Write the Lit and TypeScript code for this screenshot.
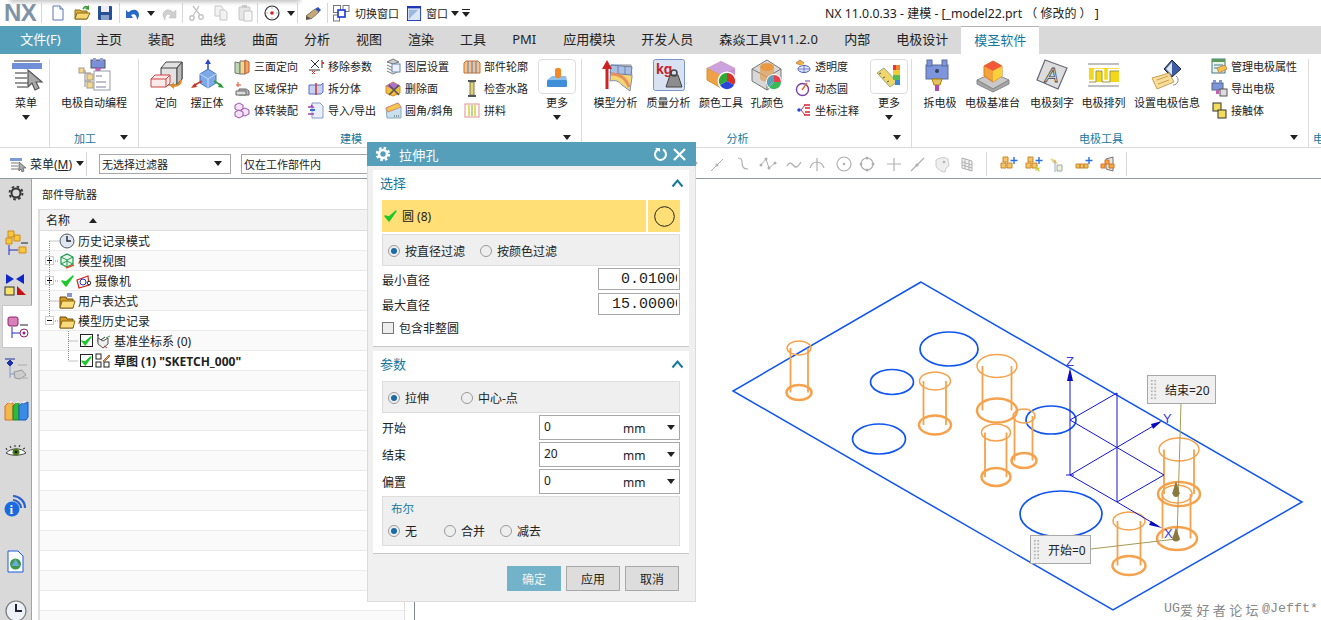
import { LitElement, html, svg, css } from 'lit';
import { customElement } from 'lit/decorators.js';

// icon helper: every icon is drawn in a square viewBox
const ic = (size: number, body: unknown, box = size) =>
  html`<svg width=${size} height=${size} viewBox="0 0 ${box} ${box}">${body}</svg>`;

const arrow = html`<svg width="8" height="5" viewBox="0 0 8 5"><path d="M0 0h8L4 5z" fill="#222" /></svg>`;
const barArrow = html`<svg width="8" height="8" viewBox="0 0 8 8"><path d="M0 0h8v1H0zM0 3h8L4 8z" fill="#222" /></svg>`;

/* ---------- large ribbon icons ---------- */
const big = {
  menu: svg`<path d="M2 4h30v6H2z" fill="#6f8fd8"/><path d="M4 2h26M5 14h12M5 19h12M5 24h14M7 28h10" stroke="#777" stroke-width="1.6"/><path d="M18 11l0 17 4-4 3 7 4-2-3-6 6 0z" fill="#aaa" stroke="#555" stroke-width="1.2"/>`,
  auto: svg`<rect x="13" y="1" width="14" height="8" fill="#7b8fd8" stroke="#556"/><rect x="15" y="-1" width="3" height="3" fill="#8fa0d8"/><rect x="22" y="-1" width="3" height="3" fill="#8fa0d8"/><path d="M17 9h6l-1 4h-4z" fill="#c45bb8"/><path d="M7 11v17M7 14h6M7 22h6" stroke="#888" fill="none"/><rect x="1" y="9" width="5" height="5" fill="#f2d98a" stroke="#a98"/><rect x="9" y="15" width="6" height="6" fill="#f2d98a" stroke="#a98"/><rect x="9" y="23" width="6" height="6" fill="#f2d98a" stroke="#a98"/><rect x="16" y="12" width="16" height="19" fill="#fff" stroke="#99a"/><path d="M18 17h6M18 23h10M18 28h10" stroke="#aab" stroke-width="1.4"/>`,
  orient: svg`<path d="M11 9l5-6h16v17l-5 6H11z" fill="#e2e2e2" stroke="#444"/><path d="M11 9h16v17M27 9l5-6" fill="none" stroke="#444"/><path d="M27 9v17l5-6V3z" fill="#bbb" stroke="#444"/><path d="M1 20l4-4h15v8l-4 4H1z" fill="#fbeaea" stroke="#c44"/><path d="M1 20h15v8M16 20l4-4" fill="none" stroke="#c44"/><path d="M31 21c0 5-4 6-8 6" fill="none" stroke="#e98a1e" stroke-width="2"/><path d="M24 23l-4 4 4 3z" fill="#e98a1e"/>`,
  align: svg`<path d="M17 2v12" stroke="#2b45c4" stroke-width="1.5"/><path d="M17 0l-3 5h6z" fill="#2b45c4"/><path d="M9 15l8-5 8 5v9l-8 5-8-5z" fill="#7ea9e8" stroke="#4a77c4"/><path d="M9 15l8 5 8-5M17 20v9" fill="none" stroke="#c8dcf5"/><path d="M11 22L2 27" stroke="#c8352b" stroke-width="1.5"/><path d="M0 29l6-1-2-4z" fill="#c8352b"/><path d="M23 22l8 5" stroke="#2c9a3a" stroke-width="1.5"/><path d="M33 29l-6-1 2-4z" fill="#2c9a3a"/>`,
  shape: svg`<path d="M11 6l20 0 1 12-2 14-8-6c-3-4-7-5-12-4z" fill="#f5d675" stroke="#7d8fb0"/><path d="M11 6l21 2-1 8-21-2z" fill="#a9c0e4" stroke="#6a7fa5"/><path d="M11 15c8 0 15 4 18 13" fill="none" stroke="#ea8f5a" stroke-width="3"/><path d="M18 6v8M25 7v9" stroke="#6a7fa5"/><path d="M7 30V9" stroke="#c22" stroke-width="3"/><path d="M7 1l-5 9h10z" fill="#c22"/>`,
  kg: svg`<rect x="0.5" y="0.5" width="31" height="31" rx="2" fill="#d8e2f2" stroke="#7a96c8"/><text x="3" y="15" font-family="Liberation Sans" font-weight="700" font-size="14" fill="#c8202a">kg</text><path d="M13 28l4-12h8l4 12z" fill="#8d8d8d" stroke="#444"/><circle cx="21" cy="14" r="3" fill="none" stroke="#444" stroke-width="1.6"/>`,
  colour: svg`<path d="M2 9l14-7 14 7v12l-14 8L2 21z" fill="#f6c24a"/><path d="M2 9l14 7v13L2 21z" fill="#f0a048" stroke="#c93"/><path d="M2 9l14-7 14 7-14 7z" fill="#cba2dc"/><path d="M16 16l14-7v12l-14 8z" fill="#c98fdc"/><circle cx="22" cy="22" r="9.5" fill="#fff"/><path d="M22 22V14a8 8 0 0 1 7 12z" fill="#d8322a"/><path d="M22 22l7 4a8 8 0 0 1-14 0z" fill="#2b45d8"/><path d="M22 22l-7 4a8 8 0 0 1 7-12z" fill="#2fa83a"/>`,
  hole: svg`<path d="M1 10l15-9 14 9v12l-14 9L1 22z" fill="#d8d8d8" stroke="#777"/><path d="M1 10l15 8 14-8M16 18v13" fill="none" stroke="#777"/><path d="M9 8v11c0 5 14 5 14 0V8z" fill="#e2a35c" opacity=".75"/><ellipse cx="16" cy="8" rx="7" ry="4" fill="#e89a42"/><circle cx="23" cy="23" r="8" fill="#fff"/><path d="M23 23v-7a7 7 0 0 1 7 7z" fill="#e8404f"/><path d="M23 23h7a7 7 0 0 1-12 5z" fill="#3bb85a"/><path d="M23 23l-5 5a7 7 0 0 1 5-12z" fill="#5aa0b8"/>`,
  elec: svg`<rect x="2" y="6" width="22" height="14" fill="#7d95dc" stroke="#5a6a9a"/><rect x="3" y="1" width="5" height="6" fill="#7d95dc" stroke="#5a6a9a"/><rect x="18" y="1" width="5" height="6" fill="#7d95dc" stroke="#5a6a9a"/><circle cx="13" cy="12" r="2" fill="#345"/><path d="M8 20h10l-2 6h-6z" fill="#e8c060" stroke="#a80"/><rect x="11" y="26" width="4" height="6" fill="#b04ab8"/>`,
  base: svg`<path d="M0 21l16-7 16 7-16 9z" fill="#c8c8c8" stroke="#888"/><path d="M0 21v4l16 8 16-8v-4l-16 9z" fill="#a6a6a6" stroke="#888"/><path d="M7 7l9-5 9 5v10l-9 6-9-6z" fill="#f2a43a" stroke="#d87a20"/><path d="M7 7l9 5 9-5-9-5z" fill="#f4583a"/><path d="M16 12v11l9-6V7z" fill="#f9d13a"/>`,
  engrave: svg`<path d="M9 1l22 8-9 21L1 21z" fill="#ddd" stroke="#667" stroke-width="1.2"/><text x="9" y="23" font-family="Liberation Sans" font-style="italic" font-size="20" fill="#e8e8e8" stroke="#444" stroke-width=".8">A</text>`,
  pattern: svg`<path d="M0 5h31M0 27h31" stroke="#aaa" stroke-width="1.5"/><path d="M1 9h30v14H1z" fill="#f2d81a"/><path d="M1 22h6V11h8v11h6V11h10" fill="none" stroke="#fff" stroke-width="2.5"/><path d="M1 23h7V12h6v11h8V12h9" fill="none" stroke="#8a7a00" stroke-width=".8"/>`,
  info: svg`<path d="M21 1l9 9-9 8-8-8z" fill="#3c5ea8" stroke="#223"/><path d="M21 3v13l-6-6z" fill="#dfe7f8"/><path d="M25 17c4 3 2 9-3 9" fill="none" stroke="#888"/><path d="M1 19l17-5 5 9-17 7z" fill="#f8dc9a" stroke="#c8a050"/><path d="M6 21l11-4M7 25l11-4" stroke="#c8a050"/>`,
  moreA: svg`<rect x="3" y="16" width="20" height="7" fill="#3f8fd8" rx="1"/><path d="M3 16l5-4h14l1 4z" fill="#8fc0ec"/><rect x="11" y="4" width="6" height="10" rx="2" fill="#f28a2a"/>`,
  moreB: svg`<path d="M1 9l7-5 13 14-7 5z" fill="#f0d66a" stroke="#9a8"/><path d="M3 10l2-1M7 14l2-1M11 18l2-1" stroke="#555"/><rect x="17" y="1" width="3" height="5" fill="#e33"/><rect x="20" y="1" width="4" height="5" fill="#e83"/><rect x="17" y="6" width="7" height="5" fill="#ec3"/><rect x="17" y="11" width="7" height="5" fill="#5b5"/><rect x="19" y="16" width="5" height="5" fill="#38d"/>`,
};

/* ---------- small ribbon icons ---------- */
const sm = {
  threeFace: svg`<path d="M1 4l5 1v11l-5-1z" fill="#bcd8b0" stroke="#777"/><path d="M6 3h5v13H6z" fill="#f4d98a" stroke="#777"/><path d="M11 2l4 2v10l-4 2z" fill="#f0a860" stroke="#c53"/>`,
  area: svg`<path d="M2 5h5M4 2v5" stroke="#d8502a"/><path d="M5 9h7l3 2v4H5z" fill="#bbb" stroke="#666"/><path d="M2 11h10v4H2z" fill="#ddd" stroke="#666"/>`,
  toAsm: svg`<path d="M5 1l4 2v4L5 9 1 7V3z" fill="#f2e4f4" stroke="#a050b0"/><path d="M11 6l4 2v4l-4 2-4-2V8z" fill="#f2e4f4" stroke="#a050b0"/><path d="M5 8l4 2v4l-4 2-4-2v-4z" fill="#f2e4f4" stroke="#a050b0"/>`,
  removeP: svg`<path d="M3 2l8 8M11 2l-8 8" stroke="#333"/><path d="M1 12h11" stroke="#333"/><path d="M14 2v8" stroke="#333"/><path d="M4 13l3 3M7 13l-3 3M14 4l2 2M16 4l-2 2" stroke="#d33"/>`,
  split: svg`<path d="M1 5h12l2-2v9l-2 2H1z" fill="#c8d2f0" stroke="#5a6ec8"/><path d="M8 3v12" stroke="#c33" stroke-width="1.5"/>`,
  impExp: svg`<path d="M4 1h8l3 3v12H4z" fill="#e8eefa" stroke="#8a9ac0"/><path d="M0 5h5l-2-2M0 12h6" stroke="#a040b0" stroke-width="1.4" fill="none"/><path d="M2 8h5" stroke="#3070c8" stroke-width="2"/>`,
  layer: svg`<path d="M2 4l6-3 6 3-6 2z" fill="#ccc" stroke="#777"/><path d="M2 7l6 3 6-3M2 10l6 3 6-3M2 13l6 3 6-3" fill="none" stroke="#777"/><rect x="7" y="6" width="8" height="8" fill="#eef" stroke="#68a"/>`,
  delFace: svg`<path d="M1 6l7-4 7 4v7l-7 3-7-3z" fill="#f2c040" stroke="#d38a20"/><path d="M8 2l7 4-7 4-7-4z" fill="#b070d0"/><path d="M4 5l10 10M14 5L4 15" stroke="#555" stroke-width="1.6"/>`,
  fillet: svg`<path d="M1 6l12-5 3 4v11H2z" fill="#c8dff0" stroke="#8ab"/><path d="M1 6l12-5 3 4-13 5z" fill="#f2c84a" stroke="#d87"/><path d="M9 14h5" stroke="#555" stroke-dasharray="1 1"/>`,
  outline: svg`<path d="M2 3h12l2 2v10H0V5z" fill="#f6c28a" stroke="#c8702a"/><path d="M4 3v12M8 3v12M12 3v12" stroke="#4a7ac8"/>`,
  water: svg`<rect x="6" y="2" width="4" height="13" fill="#e8d36a" stroke="#776"/><path d="M4 1h8M4 16h8" stroke="#555" stroke-width="2"/>`,
  pad: svg`<rect x="1" y="2" width="14" height="13" fill="#fff" stroke="#e09090"/><path d="M4 3h2v11H4z" fill="#e8d96a"/><path d="M7 3h2v11H7z" fill="#b8d88a"/><path d="M10 3h2v11h-2z" fill="#e8d96a"/>`,
  trans: svg`<path d="M1 5l4-3 4 3-4 2z" fill="#f2a83a" stroke="#b86"/><ellipse cx="9" cy="11" rx="6" ry="3.5" fill="#dfe6f8" stroke="#4a5ab8"/><path d="M9 8v6M4 11h10" stroke="#4a5ab8" stroke-width=".7"/><circle cx="7" cy="6" r="1.5" fill="#f2c23a"/>`,
  dyn: svg`<circle cx="7.5" cy="9.5" r="6" fill="none" stroke="#7a3ea8" stroke-width="1.4"/><path d="M7 10l5-7" stroke="#e0702a" stroke-width="1.4"/><path d="M10 1h5" stroke="#7a3ea8"/>`,
  coord: svg`<path d="M6 8l4-5M6 8l4 5" stroke="#c33" fill="none"/><circle cx="4" cy="8" r="1.8" fill="#2b45d8"/><path d="M9 3h6M10 6h5M10 10h5M9 13h6" stroke="#d23" stroke-width="1.3"/>`,
  mgr: svg`<rect x="1" y="1" width="13" height="14" fill="#e8f4e8" stroke="#478"/><rect x="1" y="1" width="13" height="3" fill="#5a9a5a"/><path d="M3 7h9M3 10h4" stroke="#478"/><path d="M6 10l8-3 2 4-8 4z" fill="#f2c24a" stroke="#b86"/>`,
  exp: svg`<rect x="1" y="3" width="11" height="7" fill="#7d95dc" stroke="#567"/><rect x="2" y="0" width="3" height="3" fill="#7d95dc"/><rect x="8" y="0" width="3" height="3" fill="#7d95dc"/><rect x="5" y="10" width="3" height="4" fill="#c060b0"/><rect x="9" y="9" width="7" height="7" fill="#ddd" stroke="#555"/>`,
  touch: svg`<rect x="2" y="1" width="8" height="8" fill="#f2dd5a" stroke="#333"/><rect x="7" y="8" width="8" height="8" fill="#f2dd5a" stroke="#333"/>`,
};

/* ---------- quick access and selection bar ---------- */
const top_ = {
  file: svg`<path d="M3 1h7l3 3v11H3z" fill="#fff" stroke="#5a78b8"/><path d="M10 1v3h3" fill="#cfe0f8" stroke="#5a78b8"/>`,
  open: svg`<path d="M1 5h5l1 1h6v8H1z" fill="#e2b23a" stroke="#8a6a18"/><path d="M3 8h13l-3 6H1z" fill="#f6d774" stroke="#8a6a18"/><path d="M9 4c2-3 4-3 5-1" fill="none" stroke="#3a9a3a" stroke-width="1.6"/><path d="M15 0l0 5-4-1z" fill="#3a9a3a"/>`,
  save: svg`<rect x="1" y="1" width="14" height="14" rx="1" fill="#274f95"/><rect x="4" y="1" width="8" height="6" fill="#eef"/><rect x="4" y="10" width="8" height="5" fill="#88a0c8"/>`,
  undo: svg`<path d="M4 7c4-4 10-2 10 3 0 2-1 3-2 5 0-4-2-7-6-5l2 3H1V5l2 2z" fill="#2a68c8"/>`,
  redo: svg`<path d="M12 7C8 3 2 5 2 10c0 2 1 3 2 5 0-4 2-7 6-5l-2 3h7V5l-2 2z" fill="#cfcfcf" stroke="#bbb" stroke-width=".5"/>`,
  cut: svg`<path d="M11 1L5 11M5 1l7 9" stroke="#c4c4c4" stroke-width="1.4" fill="none"/><circle cx="4" cy="13" r="2.2" fill="none" stroke="#c4c4c4" stroke-width="1.4"/><circle cx="13" cy="12" r="2.2" fill="none" stroke="#c4c4c4" stroke-width="1.4"/>`,
  copy: svg`<path d="M2 1h6l2 2v8H2z" fill="#f2f2f2" stroke="#c8c8c8"/><path d="M7 5h5l2 2v8H7z" fill="#f2f2f2" stroke="#c8c8c8"/>`,
  paste: svg`<rect x="2" y="2" width="11" height="13" rx="1" fill="#e6e6e6" stroke="#c4c4c4"/><rect x="5" y="0" width="5" height="3" fill="#ccc"/><path d="M7 6h8v10H7z" fill="#f6f6f6" stroke="#c4c4c4"/>`,
  target: svg`<circle cx="8" cy="8" r="7" fill="#fff" stroke="#333" stroke-width="1.2"/><circle cx="8" cy="8" r="1.8" fill="#d81f26"/><path d="M8 1v3M8 12v3M1 8h3M12 8h3" stroke="#888" stroke-width=".6"/>`,
  pen: svg`<path d="M1 11l9-7 4 3-8 7z" fill="#c8a878" stroke="#776"/><path d="M10 4l3-2 3 3-2 2z" fill="#2a50b8"/><path d="M1 11l5 3-5 1z" fill="#554"/>`,
  swap: svg`<rect x="0.5" y="0.5" width="7" height="7" fill="#fff" stroke="#777"/><rect x="10" y="0.5" width="6" height="6" fill="#fff" stroke="#777"/><rect x="0.5" y="10" width="6" height="6" fill="#fff" stroke="#777"/><rect x="5" y="5" width="7" height="7" fill="#fff" stroke="#1a38d8" stroke-width="1.6"/>`,
  win: svg`<rect x="0.5" y="0.5" width="14" height="15" fill="#dbe6f6" stroke="#1a38b8"/><rect x="0.5" y="0.5" width="14" height="2" fill="#1a38b8"/><path d="M2 4h10L2 14z" fill="#9ab8e0"/>`,
  menuS: svg`<path d="M0 2h12v3H0z" fill="#7d9bd8"/><path d="M1 7h7M1 10h7M1 13h8" stroke="#777"/><path d="M9 6v9l2-2 1 3 2-1-1-3h3z" fill="#aaa" stroke="#555" stroke-width=".7"/>`,
};

const gr = '#b0b0b0';
const threeCubes = svg`<path d="M3 1h5v5H3zM1 7h5v5H1zM7 7h5v5H7z" fill="#f4c468" stroke="#c8862a"/>`;
const plus = svg`<path d="M14 1v7M10.5 4.5h7" stroke="#2a6fe8" stroke-width="1.4"/>`;
// width is the distance to the next icon's left edge
const selGrey: [number, unknown][] = [
  [20, svg`<path d="M0 13l6-6" stroke="${gr}"/><circle cx="7" cy="7" r="1.5" fill="${gr}"/>`],
  [26, svg`<path d="M2 15L14 3" stroke="${gr}"/><circle cx="8" cy="9" r="1.5" fill="${gr}"/>`],
  [25, svg`<path d="M3 2c6 0 3 6 5 9 1 2 3 2 5 2" fill="none" stroke="${gr}" stroke-width="1.2"/>`],
  [26, svg`<path d="M1 9l5-6 3 9 6-5" fill="none" stroke="${gr}"/><circle cx="6" cy="3" r="1.5" fill="${gr}"/><circle cx="1" cy="9" r="1.5" fill="${gr}"/><circle cx="9" cy="12" r="1.5" fill="${gr}"/><circle cx="15" cy="7" r="1.5" fill="${gr}"/>`],
  [23, svg`<path d="M1 10c3-6 5-2 7 0s4 1 7-4" fill="none" stroke="${gr}" stroke-width="1.4"/>`],
  [27, svg`<path d="M8 2v13M1 12c2-6 5-6 7-6s5 0 7 6" fill="none" stroke="${gr}" stroke-width="1.2"/>`],
  [23, svg`<circle cx="8" cy="8" r="7" fill="none" stroke="${gr}" stroke-width="1.2"/><circle cx="8" cy="8" r="1.3" fill="${gr}"/>`],
  [27, svg`<circle cx="8" cy="8" r="6" fill="none" stroke="${gr}" stroke-width="1.2"/><circle cx="8" cy="2" r="1.5" fill="${gr}"/><circle cx="2" cy="8" r="1.5" fill="${gr}"/><circle cx="14" cy="8" r="1.5" fill="${gr}"/><circle cx="8" cy="14" r="1.5" fill="${gr}"/>`],
  [23, svg`<path d="M8 2v13M1 8h14" stroke="${gr}" stroke-width="1.2"/>`],
  [25, svg`<path d="M2 15L15 2" stroke="${gr}" stroke-width="1.2"/><circle cx="8" cy="9" r="1.6" fill="${gr}"/>`],
  [25, svg`<path d="M2 4c4-3 9-3 12-1l1 7-3 2-1 4C7 16 3 13 2 10z" fill="#eee" stroke="#ccc"/><circle cx="10" cy="6" r="1.3" fill="${gr}"/>`],
  [27, svg`<path d="M3 2l10 3v10L3 12z" fill="#f4f4f4" stroke="${gr}"/><path d="M3 6l10 3M3 9l10 3M6 3v10M10 4v10" stroke="${gr}"/>`],
];
const selColour: [number, unknown][] = [
  [25, svg`${threeCubes}${plus}`],
  [23, svg`${threeCubes}${plus}<path d="M11 10l2 2 3-1-2 2 1 3-3-2-2 1 1-3z" fill="#c8d23a"/>`],
  [27, svg`<path d="M2 2l5 2 3 4-5-1z" fill="#f2d264"/><path d="M9 9h5v6H9z" fill="#f4f0c8" stroke="#9ab"/><path d="M7 4v12" stroke="#9ab"/>`],
  [25, svg`<path d="M1 8h4v4H1zM5 8h4v4H5zM9 8h4v4H9z" fill="#f2c264" stroke="#c8862a"/>${plus}`],
  [26, svg`<path d="M6 3l7-2v14l-7-2z" fill="#e4e4e4" stroke="#777"/><path d="M1 8h4v4H1zM5 4h4v4H5zM9 8h5v4H9z" fill="#f0a838" stroke="#d8702a"/>`],
];

/* ---------- left rail ---------- */
const rail = [
  { h: 28, gap: 16, active: false, body: svg`<circle cx="12" cy="12" r="4.5" fill="none" stroke="#333" stroke-width="2"/><circle cx="12" cy="12" r="6.5" fill="none" stroke="#333" stroke-width="1.8" stroke-dasharray="2.5 2.6"/>` },
  { h: 40, gap: 0, active: false, body: svg`<path d="M4 0h6v6H4zM10 4h6v6h-6zM2 7h6v6H2z" fill="#f6c83a" stroke="#d08a20"/><path d="M5 14v10M5 19h9" stroke="#2030c8"/><path d="M17 12h7" stroke="#222"/><path d="M15 16h7v6h-7z" fill="#f6c83a" stroke="#d08a20"/>` },
  { h: 42, gap: 0, active: false, body: svg`<path d="M2 2l8 5-8 5zM20 2l-8 5 8 5z" fill="#1028c8"/><rect x="1" y="15" width="9" height="8" fill="#f8e26a" stroke="#333"/><path d="M13 14l9 9h-9z" fill="#c81010"/>` },
  { h: 43, gap: 2, active: true, body: svg`<rect x="2" y="2" width="10" height="9" rx="2" fill="#d880b8" stroke="#902070"/><path d="M14 10h8" stroke="#222"/><path d="M6 12v11M6 18h8" stroke="#2030c8"/><circle cx="18" cy="18" r="4" fill="none" stroke="#902070"/><circle cx="18" cy="18" r="1.5" fill="#902070"/>` },
  { h: 40, gap: 1, active: false, body: svg`<path d="M6 2l3 3-3 3-3-3zM1 1h10" fill="#2030a8" stroke="#2030a8"/><path d="M6 8v12M6 16h5" stroke="#8098c8"/><path d="M10 14l8-2 4 5-6 4-5-1z" fill="#ccc" stroke="#999"/><path d="M14 7h9M18 20h6" stroke="#aaa"/>` },
  { h: 40, gap: 0, active: false, body: svg`<path d="M1 7l3-3h5v17H1z" fill="#f2b84a" stroke="#d8702a"/><path d="M9 7l3-3h3v17H9z" fill="#2fb83a" stroke="#18882a"/><path d="M15 7l3-3h4l2-1v15l-2 3h-7z" fill="#3a8ae8" stroke="#1a5ab8"/><path d="M4 4l3-2h3l-3 2zM11 4l3-2h3l-3 2zM17 4l3-2h3l-3 2z" fill="#fff" stroke="#ccc" stroke-width=".5"/>` },
  { h: 40, gap: 14, active: false, body: svg`<path d="M2 14c5-5 15-6 20 0-6 3-15 3-20 0z" fill="#fff" stroke="#444"/><circle cx="12" cy="13" r="3.5" fill="#4a7a1a"/><circle cx="12" cy="13" r="1.3" fill="#111"/><path d="M3 11l-1-2M7 9L6 7M11 8V6M15 8l1-2M19 10l2-1" stroke="#222"/>` },
  { h: 40, gap: 17, active: false, body: svg`<circle cx="8" cy="16" r="7.5" fill="#1a6ae0"/><text x="5.5" y="21" font-family="Liberation Serif" font-weight="700" font-size="13" fill="#fff">i</text><path d="M9 3c6 0 12 5 12 12M9 7c4 0 8 4 8 8" fill="none" stroke="#2a62c8" stroke-width="2.2"/>` },
  { h: 40, gap: 10, active: false, body: svg`<path d="M4 1h10l5 5v16H4z" fill="#fff" stroke="#1a5ad8"/><circle cx="11.5" cy="14" r="5.5" fill="#3a9a4a"/><path d="M11.5 9l4 7h-8z" fill="#70a8d8"/>` },
  { h: 36, gap: 0, active: false, body: svg`<circle cx="12" cy="13" r="10" fill="#eef2f8" stroke="#777" stroke-width="1.2"/><path d="M12 6v7h6" fill="none" stroke="#223" stroke-width="2"/>` },
];

/* ---------- tree ---------- */
const folder = svg`<path d="M1 4h6l1 2h6v9H1z" fill="#d89a1a" stroke="#6a4a10"/><path d="M3 8h13l-2 7H1z" fill="#fbdc7c" stroke="#8a6a18"/>`;
const treeIcons = {
  clock: svg`<circle cx="8" cy="8" r="7" fill="#dde6f2" stroke="#555"/><path d="M8 3v5h4" fill="none" stroke="#222" stroke-width="1.4"/>`,
  view: svg`<path d="M8 1l6 3v7l-6 3-6-3V4z" fill="#e8f6ea" stroke="#1a9a50" stroke-width="1.2"/><path d="M2 4l6 3 6-3M8 7v7M2 11l6-3 6 3" fill="none" stroke="#1a9a50"/><path d="M7 15l8-3" stroke="#e8502a" stroke-width="1.4"/>`,
  cam: svg`<path d="M1 7l11-4 1 9-10 3z" fill="#fff" stroke="#d8201a" stroke-width="1.2"/><circle cx="7" cy="9" r="3" fill="none" stroke="#2030c8"/><circle cx="13" cy="10" r="1.8" fill="#fff" stroke="#222"/>`,
  expr: svg`${folder}<path d="M8 1h5M8 3h5" stroke="#2030a8"/>`,
  csys: svg`<path d="M3 1v8M3 9l6 4M3 9l7-5" stroke="#333" fill="none"/><path d="M3 5l5 3 5-3v6l-5 4-5-4z" fill="#eee" stroke="#555"/><path d="M11 5l4-2" stroke="#2a9a3a"/><path d="M3 1l-1 2h2z" fill="#2030c8"/><path d="M9 13l3 2" stroke="#c33"/>`,
  sketch: svg`<rect x="1" y="1" width="5" height="5" fill="#fff" stroke="#222"/><rect x="1" y="9" width="5" height="5" fill="#fff" stroke="#222"/><rect x="9" y="9" width="5" height="5" fill="#fff" stroke="#222"/><path d="M8 8l6-6 1 1-6 6z" fill="#e8a030" stroke="#a65"/>`,
};
const check = html`<svg width="13" height="12" viewBox="0 0 13 12"><path d="M1 6l4 5 7-10-7 6z" fill="#1ec82a" stroke="#1ec82a" stroke-width="1.5" stroke-linejoin="round" /></svg>`;
const tick = html`<span class="tick">${check}</span>`;
const expander = (open: boolean) =>
  html`<span class="exp"><svg width="7" height="7" viewBox="0 0 7 7"><path d=${open ? 'M1 3.5h5' : 'M1 3.5h5M3.5 1v5'} stroke="#111" /></svg></span>`;
const noExp = html`<span class="exp none"></span>`;
const rows = [
  { cls: 'l0', lead: noExp, icon: treeIcons.clock, text: '历史记录模式' },
  { cls: 'l0', lead: expander(false), icon: treeIcons.view, text: '模型视图' },
  { cls: 'l0', lead: html`${expander(false)}<span class="chk">${check}</span>`, icon: treeIcons.cam, text: '摄像机' },
  { cls: 'l0', lead: noExp, icon: treeIcons.expr, text: '用户表达式' },
  { cls: 'l0', lead: expander(true), icon: folder, text: '模型历史记录' },
  { cls: 'l1', lead: tick, icon: treeIcons.csys, text: '基准坐标系 (0)' },
  { cls: 'l1 bold', lead: tick, icon: treeIcons.sketch, text: '草图 (1) "SKETCH_000"' },
  ...Array.from({ length: 13 }, () => ({ cls: '', lead: '', icon: null, text: '' })),
];

/* ---------- model: [cx, top cy, rx, ry, bottom cy, rx, ry, left x, right x] ---------- */
const cyl = [
  [799, 348, 12, 7, 392.5, 12.5, 7.5, 790.5, 808],
  [935, 381, 15.5, 9, 425, 16, 9.5, 923.5, 946],
  [997, 366, 20, 11.5, 410.5, 20, 12, 982.5, 1011.5],
  [996, 432.5, 14.5, 8.5, 477, 14.5, 9, 985, 1006.5],
  [1024, 416, 11, 7, 460.5, 12.5, 7.5, 1014.5, 1032.5],
  [1129, 521, 16, 9, 565.5, 16.5, 9.5, 1117.5, 1140.5],
  [1179, 449.5, 20, 11.5, 494, 21, 12, 1164, 1194],
  [1177, 494, 15, 9, 538.5, 20, 11.5, 1162.5, 1190.5],
];
const holes = [
  [949, 349, 29, 17],
  [892, 382, 21.5, 12.5],
  [879, 439, 26.5, 15],
  [1051, 420, 25, 14],
  [1061, 514, 41, 23],
];

@customElement('app-root')
export class AppRoot extends LitElement {
  static styles = css`
    :host {
      display: block;
      position: relative;
      width: 1321px;
      height: 620px;
      overflow: hidden;
      background: #fff;
      color: #222;
      font: 12px "Noto Sans", "Noto Sans CJK SC", sans-serif;
    }
    * { box-sizing: border-box; }
    svg { display: block; flex: none; overflow: visible; }

    .page { display: flex; flex-direction: column; height: 620px; }

    /* title row */
    .title { display: flex; align-items: center; height: 26px; flex: none; font-size: 11px; }
    .logo { width: 41px; padding-left: 4px; font: 700 24px/26px "Liberation Sans", sans-serif; color: #7f93a6; letter-spacing: -0.5px; }
    .vsep { width: 1px; height: 20px; background: #d8d8d8; flex: none; }
    .tb { display: flex; align-items: center; justify-content: center; flex: none; height: 26px; }
    .caption { font-size: 12.3px; white-space: nowrap; padding-left: 353px; }
    .caption b { font-weight: 400; font-size: 12px; }
    .swaplbl { margin: 0 8px 0 1px; }
    .winlbl { margin: 0 2px 0 5px; }
    .shade { position: absolute; left: 10px; top: -3px; width: 290px; height: 5px; background: #bbb; filter: blur(2px); }

    /* tabs */
    .tabs { display: flex; height: 28px; flex: none; background: #d9d9d9; font-size: 13px; line-height: 27px; padding-left: 83px; position: relative; }
    .file { position: absolute; left: 0; top: 0; width: 81px; height: 28px; background: #559fba; color: #fff; text-align: center; }
    .tab { padding: 0 13px; white-space: nowrap; }
    .tab.pmi { padding-right: 14px; }
    .tab.wide { letter-spacing: 0.22px; }
    .tab.on { background: #fff; color: #15779c; border-top: 1px solid #b4b4b4; }

    /* ribbon */
    .ribbon { display: flex; height: 94px; flex: none; font-size: 11px; border-bottom: 1px solid #d9d9d9; }
    .group { display: flex; flex-direction: column; flex: none; height: 89px; margin-top: 5px; border-right: 1px solid #dcdcdc; }
    .gbody { display: flex; height: 71px; margin-top: -4px; flex: none; }
    .gfoot { display: flex; align-items: center; height: 18px; margin-top: 2px; color: #15779c; padding-top: 1px; }
    .gfoot span { flex: 1; text-align: center; }
    .gfoot i { width: 18px; display: block; flex: none; }
    .gfoot.rest { padding-left: 4px; }
    .group.last { border: 0; flex: 1; overflow: hidden; }
    .bigbtn { display: flex; flex-direction: column; align-items: center; flex: none; padding-top: 4px; white-space: nowrap; }
    .bigbtn .lbl { margin-top: 4px; line-height: 16px; height: 16px; }
    .bigbtn .dd { margin-top: 4px; }
    .bigbtn.mb { width: 38px; }
    .bigbtn.mb .lbl { margin-top: 1px; }
    .more { width: 38px; height: 35px; border: 1px solid #ddd; border-radius: 4px; display: flex; align-items: center; justify-content: center; }
    .smcol { display: flex; flex-direction: column; flex: none; }
    .small { display: flex; align-items: center; gap: 4px; height: 22px; white-space: nowrap; }

    /* selection bar */
    .selbar { display: flex; align-items: center; height: 31px; flex: none; border-bottom: 1px solid #8f9a9e; padding-top: 1px; font-size: 11px; }
    .selmenu { display: flex; align-items: center; gap: 4px; padding-left: 10px; width: 86px; font-size: 12px; }
    .combo { display: flex; align-items: center; justify-content: space-between; height: 20px; border: 1px solid #a8a8a8; padding: 0 8px 0 2px; flex: none; }
    .combo.a { width: 132px; margin-left: 12px; }
    .combo.b { width: 140px; margin-left: 10px; }
    .icons { display: flex; align-items: center; margin-left: 308px; }
    .icons div { flex: none; }
    .icons .vsep { width: 1px; height: 24px; }
    .icons .gapr { width: 13px; }

    /* main */
    .main { display: flex; flex: 1; min-height: 0; }
    .rail { width: 32px; flex: none; background: #d9d9d9; border-right: 1px solid #a3a3a3; display: flex; flex-direction: column; align-items: stretch; }
    .ri { display: flex; align-items: center; justify-content: center; flex: none; }
    .ri.on { background: #fff; margin-left: 2px; margin-right: -1px; border: 1px solid #c8c8c8; border-right: 0; }
    .nav { width: 373px; flex: none; border-right: 1px solid #ddd; padding-left: 6px; overflow: hidden; }
    .navtitle { height: 30px; line-height: 31px; padding-left: 4px; font-size: 11px; }
    .tree { position: relative; border-left: 2px solid #ddd; }
    .thead { display: flex; align-items: center; height: 22px; background: #f3f3f3; border-top: 1px solid #ddd; border-bottom: 1px solid #ddd; padding-left: 6px; gap: 19px; }
    .tri { width: 0; height: 0; border: 4px solid transparent; border-top: 0; border-bottom: 5px solid #222; }
    .row { display: flex; align-items: center; height: 20px; border-bottom: 1px solid #ebebeb; white-space: nowrap; }
    .row:nth-child(even) { background: #fafafa; }
    .row.l0 { padding-left: 5px; }
    .row.l1 { padding-left: 40px; }
    .row.bold { font-weight: 700; }
    .row .name { margin-left: 3px; }
    .exp { display: flex; align-items: center; justify-content: center; width: 9px; height: 9px; background: #fff; border: 1px solid #ccc; margin-right: 5px; flex: none; }
    .exp.none { visibility: hidden; }
    .chk { margin: 0 2px; display: block; }
    .tick { display: flex; align-items: center; justify-content: center; width: 13px; height: 13px; border: 1px solid #222; background: #fff; margin-right: 2px; flex: none; }
    .tick svg { width: 11px; height: 10px; }
    .guides { position: absolute; left: 0; top: 0; }

    /* canvas */
    .sash { width: 9px; flex: none; }
    .canvas { position: relative; flex: 1; min-width: 0; border-left: 1px solid #808a90; }
    .note { position: absolute; display: flex; align-items: center; height: 29px; background: #f0f0f0; border: 1px solid #a8a8a8; white-space: nowrap; }
    .note.end { left: 732px; top: 196px; width: 69px; }
    .note.start { left: 615px; top: 356px; width: 61px; }
    .grip { width: 7px; height: 21px; margin: 0 8px 0 2px; background-image: radial-gradient(#b4b4b4 1.2px, transparent 1.3px); background-size: 3.5px 3.5px; flex: none; }
    .mark { position: absolute; left: 749px; top: 420px; display: flex; align-items: center; color: #888; font: 13.33px "Liberation Mono", monospace; white-space: nowrap; line-height: 20px; }
    .mark b { font: 13px "Noto Sans CJK SC", sans-serif; letter-spacing: 3.4px; }

    /* dialog */
    .dlg { position: absolute; left: 367px; top: 142px; width: 329px; height: 460px; background: #f0f0f0; border: 1px solid #dcdcdc; border-top: 0; display: flex; flex-direction: column; }
    .dhead { display: flex; align-items: center; height: 24px; margin: 0 -1px; background: #559fba; color: #fff; font-size: 13px; padding: 0 10px 0 8px; flex: none; }
    .dhead .t { margin-left: 8px; flex: 1; letter-spacing: 0.3px; }
    .dhead svg + svg { margin-left: 5px; }
    .sec { background: #fff; margin: 0 6px 0 5px; padding: 0 9px; flex: none; border-bottom: 1px solid #c8c8c8; }
    .sec.one { margin-top: 4px; height: 177px; }
    .sec.two { margin-top: 4px; height: 203px; }
    .shead { display: flex; align-items: center; justify-content: space-between; height: 26px; color: #15779c; font-size: 13px; margin-left: -2px; padding-bottom: 1px; }
    .chev { margin-right: -3px; }
    .pick { display: flex; gap: 2px; height: 32px; margin-top: 4px; }
    .pick .y { background: #ffdf76; display: flex; align-items: center; }
    .pick .wide { flex: 1; padding: 0 0 1px 2px; gap: 5px; }
    .pick .nar { width: 32px; justify-content: center; }
    .grey { display: flex; align-items: center; height: 32px; margin-top: 2px; background: #efefef; border: 1px solid #ddd; padding: 1px 0 0 5px; }
    .grey.top { margin-top: 4px; }
    .rd { display: flex; align-items: center; gap: 5px; white-space: nowrap; }
    .radio { width: 12px; height: 12px; border-radius: 50%; border: 1px solid #999; background: #eee; display: flex; align-items: center; justify-content: center; box-shadow: inset 0 0 1px #fff; flex: none; }
    .radio.on::after { content: ''; width: 6px; height: 6px; border-radius: 50%; background: #1a6aa5; }
    .field { display: flex; align-items: center; justify-content: space-between; height: 22px; margin-top: 2px; }
    .field + .field { margin-top: 3px; }
    .field > span { padding-top: 1px; }
    .num { width: 82px; height: 22px; border: 1px solid #a8a8a8; padding-right: 2px; background: #fff; overflow: hidden; }
    .num div { display: flex; justify-content: flex-end; overflow: hidden; height: 20px; }
    .num span { font: 15px/22px "Liberation Mono", monospace; margin-right: -7px; white-space: pre; }
    .cb { display: flex; align-items: center; gap: 5px; height: 22px; margin-top: 2px; }
    .box { width: 12px; height: 12px; border: 1px solid #777; background: #eee; flex: none; }
    .urow { display: flex; align-items: center; justify-content: space-between; height: 25px; margin-top: 2px; }
    .unit { width: 141px; height: 25px; border: 1px solid #a8a8a8; display: flex; align-items: center; padding: 0 4px 2px 4px; background: #fff; }
    .unit .v { flex: 1; }
    .unit .u { width: 44px; padding-top: 3px; }
    .unit svg { margin-top: 1px; }
    .bool { margin-top: 2px; height: 50px; background: #efefef; border: 1px solid #ddd; padding: 4px 0 0 5px; }
    .bool .cap { color: #15779c; padding-left: 3px; height: 20px; line-height: 16px; font-size: 11.5px; }
    .bool .opts { display: flex; padding-top: 1px; }
    .foot { display: flex; justify-content: flex-end; gap: 5px; padding: 12px 16px 0 0; }
    .btn { width: 54px; height: 25px; display: flex; align-items: center; justify-content: center; background: #ddd; border: 1px solid #a8a8a8; }
    .btn.ok { background: #73b3c9; border-color: #73b3c9; color: #eef6f9; }
  `;

  private tb(w: number, icon: unknown, size = 16) {
    return html`<div class="tb" style="width:${w}px">${ic(size, icon, 16)}</div>`;
  }

  private dd(w: number, mark: unknown = arrow) {
    return html`<div class="tb" style="width:${w}px">${mark}</div>`;
  }

  private bigBtn(w: number, label: string, icon: unknown, dd = false) {
    return html`<div class="bigbtn" style="width:${w}px">
      ${ic(32, icon)}
      <div class="lbl">${label}</div>
      ${dd ? html`<div class="dd">${arrow}</div>` : ''}
    </div>`;
  }

  private moreBtn(icon: unknown) {
    return html`<div class="bigbtn mb">
      <div class="more">${ic(26, icon, 26)}</div>
      <div class="lbl">更多</div>
      <div class="dd">${arrow}</div>
    </div>`;
  }

  private smCol(w: number, items: [unknown, string][]) {
    return html`<div class="smcol" style="width:${w}px">
      ${items.map(([i, t]) => html`<div class="small">${ic(16, i)}<span>${t}</span></div>`)}
    </div>`;
  }

  private group(w: number, pad: number, label: string, body: unknown) {
    return html`<div class="group" style="width:${w}px">
      <div class="gbody" style="padding-left:${pad}px">${body}</div>
      <div class="gfoot"><span>${label}</span><i>${arrow}</i></div>
    </div>`;
  }

  private radio(on: boolean, label: string, w: number) {
    return html`<label class="rd" style="width:${w}px"><span class="radio ${on ? 'on' : ''}"></span>${label}</label>`;
  }

  private unitRow(label: string, v: string) {
    return html`<div class="urow"><span>${label}</span>
      <div class="unit"><span class="v">${v}</span><span class="u">mm</span>${arrow}</div></div>`;
  }

  private chevron() {
    return html`<svg class="chev" width="11" height="8" viewBox="0 0 11 8"><path d="M0.5 7.5l5-6 5 6" fill="none" stroke="#15779c" stroke-width="2" /></svg>`;
  }

  private canvas() {
    const blue = '#0f55f0';
    const orange = '#f6a24c';
    const csys = '#1414d8';
    return svg`
      <polygon points="921,282 733,391 1113,610 1302,502" fill="none" stroke=${blue} stroke-width="1.5"/>
      ${holes.map(([cx, cy, rx, ry]) => svg`<ellipse cx=${cx} cy=${cy} rx=${rx} ry=${ry} fill="none" stroke=${blue} stroke-width="1.7"/>`)}
      ${cyl.map(([cx, ty, trx, tr, by, brx, br, lx, rx]) => svg`
        <ellipse cx=${cx} cy=${ty} rx=${trx} ry=${tr} fill="none" stroke=${orange} stroke-width="1.5"/>
        <ellipse cx=${cx} cy=${by} rx=${brx} ry=${br} fill="none" stroke=${orange} stroke-width="2.5"/>
        <path d="M${lx} ${ty}V${by}M${rx} ${ty}V${by}" stroke=${orange} stroke-width="1.8"/>`)}
      <path d="M1070 475V378M1070 420L1164 475L1117 502L1070 475M1070 475L1160 422M1070 420L1117 393V502L1158 526M1066 475h8" fill="none" stroke=${csys}/>
      <path d="M1070 368l-3 13h6z" fill="#0a0ac0"/>
      <path d="M1162 421l-11 3 2 5z" fill="#0a0ac0"/>
      <path d="M1162 528l-11-7-2 4z" fill="#0a0ac0"/>
      <g font-family="Liberation Sans" font-size="13" fill="#3a3ae0">
        <text x="1066" y="366">Z</text><text x="1163" y="423">Y</text><text x="1164" y="538">X</text>
      </g>
      <path d="M1181 404L1177 540M1091 549L1176 539" stroke="#a89a55" fill="none"/>
      <path d="M1176 481l-4 13h8zM1176 527l-4 13h8z" fill="#8a7a40"/>
      <circle cx="1176" cy="494" r="3" fill="#8a7a40"/><circle cx="1176" cy="538" r="3.5" fill="#8a7a40"/>`;
  }

  render() {
    return html`<div class="page">
        <div class="title">
          <div class="logo">NX</div>
          <div class="vsep"></div>
          <div style="width:4px"></div>
          ${this.tb(24, top_.file)}${this.tb(23, top_.open)}${this.tb(24, top_.save)}
          <div style="width:2px"></div><div class="vsep"></div>
          ${this.tb(26, top_.undo)}${this.dd(10)}${this.tb(26, top_.redo)}
          <div class="vsep"></div>
          ${this.tb(26, top_.cut)}${this.tb(23, top_.copy)}${this.tb(25, top_.paste)}
          <div class="vsep"></div>
          ${this.tb(27, top_.target)}${this.dd(12)}
          <div class="vsep"></div>
          ${this.tb(29, top_.pen)}
          <div class="vsep"></div>
          ${this.tb(26, top_.swap)}
          <span class="swaplbl">切换窗口</span>
          ${this.tb(14, top_.win, 15)}
          <span class="winlbl">窗口</span>
          ${this.dd(10)}${this.dd(12, barArrow)}
          <div class="caption">NX 11.0.0.33 - <b>建模</b> - [_model22.prt <b>（ 修改的 ）</b> ]</div>
        </div>
        <div class="tabs">
          <div class="file">文件(F)</div>
          ${['主页', '装配', '曲线', '曲面', '分析', '视图', '渲染', '工具'].map((t) => html`<div class="tab">${t}</div>`)}
          <div class="tab pmi">PMI</div>
          <div class="tab">应用模块</div>
          <div class="tab">开发人员</div>
          <div class="tab wide">森焱工具V11.2.0</div>
          <div class="tab">内部</div>
          <div class="tab">电极设计</div>
          <div class="tab on">模圣软件</div>
        </div>
        <div class="ribbon">
          <div class="group" style="width:50px">
            <div class="gbody" style="padding-left:10px">${this.bigBtn(32, '菜单', big.menu, true)}</div>
          </div>
          ${this.group(89, 0, '加工', this.bigBtn(88, '电极自动编程', big.auto))}
          ${this.group(443, 7, '建模', html`
            ${this.bigBtn(40, '定向', big.orient)}${this.bigBtn(42, '摆正体', big.align)}
            <div style="width:6px"></div>
            ${this.smCol(74, [[sm.threeFace, '三面定向'], [sm.area, '区域保护'], [sm.toAsm, '体转装配']])}
            ${this.smCol(77, [[sm.removeP, '移除参数'], [sm.split, '拆分体'], [sm.impExp, '导入/导出']])}
            ${this.smCol(79, [[sm.layer, '图层设置'], [sm.delFace, '删除面'], [sm.fillet, '圆角/斜角']])}
            ${this.smCol(74, [[sm.outline, '部件轮廓'], [sm.water, '检查水路'], [sm.pad, '拼料']])}
            ${this.moreBtn(big.moreA)}`)}
          ${this.group(330, 7, '分析', html`
            ${this.bigBtn(53, '模型分析', big.shape)}${this.bigBtn(53, '质量分析', big.kg)}
            ${this.bigBtn(52, '颜色工具', big.colour)}${this.bigBtn(40, '孔颜色', big.hole)}
            <div style="width:8px"></div>
            ${this.smCol(75, [[sm.trans, '透明度'], [sm.dyn, '动态圆'], [sm.coord, '坐标注释']])}
            ${this.moreBtn(big.moreB)}`)}
          ${this.group(397, 4, '电极工具', html`
            ${this.bigBtn(48, '拆电极', big.elec)}${this.bigBtn(57, '电极基准台', big.base)}
            ${this.bigBtn(62, '电极刻字', big.engrave)}${this.bigBtn(41, '电极排列', big.pattern)}
            ${this.bigBtn(86, '设置电极信息', big.info)}
            <div style="width:1px"></div>
            ${this.smCol(92, [[sm.mgr, '管理电极属性'], [sm.exp, '导出电极'], [sm.touch, '接触体']])}`)}
          <div class="group last">
            <div class="gbody"></div>
            <div class="gfoot rest">电</div>
          </div>
        </div>
        <div class="selbar">
          <div class="selmenu">${ic(16, top_.menuS)}<span>菜单(<u>M</u>)</span>${arrow}</div>
          <div class="vsep" style="height:24px"></div>
          <div class="combo a"><span>无选择过滤器</span>${arrow}</div>
          <div class="combo b"><span>仅在工作部件内</span></div>
          <div class="icons">
            ${selGrey.map(([w, i]) => html`<div style="width:${w}px">${ic(16, i)}</div>`)}
            <div class="vsep"></div><div class="gapr"></div>
            ${selColour.map(([w, i]) => html`<div style="width:${w}px">${ic(16, i)}</div>`)}
            <div class="vsep"></div>
          </div>
        </div>
        <div class="main">
          <div class="rail">
            ${rail.map((r) => html`<div class="ri ${r.active ? 'on' : ''}" style="height:${r.h}px;margin-bottom:${r.gap}px">${ic(24, r.body)}</div>`)}
          </div>
          <div class="nav">
            <div class="navtitle">部件导航器</div>
            <div class="tree">
              <div class="thead"><span>名称</span><span class="tri"></span></div>
              <div>
                ${rows.map((r) => html`<div class="row ${r.cls}">
                  ${r.lead}${r.icon ? ic(16, r.icon) : ''}${r.text ? html`<span class="name">${r.text}</span>` : ''}
                </div>`)}
              </div>
              <svg class="guides" width="60" height="180">
                <path d="M9.5 32V107M9.5 32h9M15 52h4M15 72h4M9.5 92h9M15 112h4M28.5 122V152M28.5 132h10M28.5 152h10" fill="none" stroke="#888" stroke-dasharray="1 1" />
              </svg>
            </div>
          </div>
          <div class="sash"></div>
          <div class="canvas">
            <svg width="906" height="441" viewBox="415 179 906 441">${this.canvas()}</svg>
            <div class="note end"><i class="grip"></i>结束=20</div>
            <div class="note start"><i class="grip"></i>开始=0</div>
            <div class="mark">UG<b>爱好者论坛</b>@Jefft*</div>
          </div>
        </div>
      </div>
      <div class="shade"></div>
      <div class="dlg">
        <div class="dhead">
          <svg width="16" height="16" viewBox="0 0 16 16"><circle cx="8" cy="8" r="4" fill="none" stroke="#fff" stroke-width="2.5" /><circle cx="8" cy="8" r="6" fill="none" stroke="#fff" stroke-width="2.4" stroke-dasharray="2.5 2.2" /></svg>
          <span class="t">拉伸孔</span>
          <svg width="14" height="14" viewBox="0 0 14 14"><path d="M4 2.5a5.5 5.5 0 1 0 5 0" fill="none" stroke="#fff" stroke-width="2" /><path d="M1 1l5 0 0 4z" fill="#fff" /></svg>
          <svg width="13" height="13" viewBox="0 0 13 13"><path d="M1 1l11 11M12 1L1 12" stroke="#fff" stroke-width="2.2" /></svg>
        </div>
        <div class="sec one">
          <div class="shead">选择${this.chevron()}</div>
          <div class="pick">
            <div class="y wide">${check}<span>圆 (8)</span></div>
            <div class="y nar"><svg width="21" height="21" viewBox="0 0 21 21"><circle cx="10.5" cy="10.5" r="9.8" fill="none" stroke="#222" /></svg></div>
          </div>
          <div class="grey">${this.radio(true, '按直径过滤', 92)}${this.radio(false, '按颜色过滤', 90)}</div>
          <div class="field"><span>最小直径</span><div class="num"><div><span>0.01000</span></div></div></div>
          <div class="field"><span>最大直径</span><div class="num"><div><span>15.00000</span></div></div></div>
          <div class="cb"><span class="box"></span>包含非整圆</div>
        </div>
        <div class="sec two">
          <div class="shead">参数${this.chevron()}</div>
          <div class="grey top">${this.radio(true, '拉伸', 73)}${this.radio(false, '中心-点', 70)}</div>
          ${this.unitRow('开始', '0')}
          ${this.unitRow('结束', '20')}
          ${this.unitRow('偏置', '0')}
          <div class="bool">
            <div class="cap">布尔</div>
            <div class="opts">${this.radio(true, '无', 56)}${this.radio(false, '合并', 56)}${this.radio(false, '减去', 50)}</div>
          </div>
        </div>
        <div class="foot">
          <div class="btn ok">确定</div><div class="btn">应用</div><div class="btn">取消</div>
        </div>
      </div>`;
  }
}
